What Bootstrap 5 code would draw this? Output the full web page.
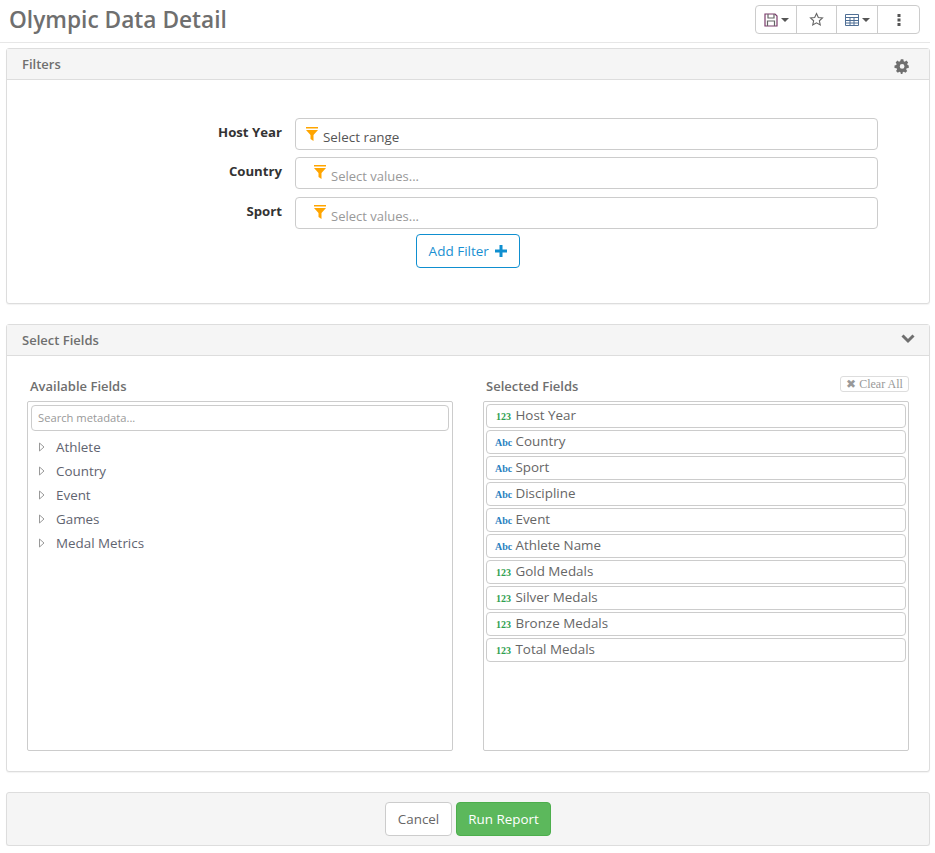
<!DOCTYPE html>
<html lang="en">
<head>
  <meta charset="UTF-8">
  <meta name="viewport" content="width=device-width, initial-scale=1.0">
  <title>Olympic Data Detail</title>
  <link href="https://cdn.jsdelivr.net/npm/bootstrap@5.3.3/dist/css/bootstrap.min.css" rel="stylesheet">
  <style>
    body {
      font-family: "Open Sans", "Noto Sans", sans-serif;
      font-size: 13.4px;
      color: #666;
      background: #fff;
      overflow: hidden;
    }
    .page-wrap { padding: 0 5px 0 6px; }
    .page-head {
      height: 43px;
      margin: 0 0 5px -6px;
      padding: 0 10px 0 9px;
      border-bottom: 1px solid #e7e7e7;
    }
    .page-title { font-size: 22.7px; font-weight: 600; color: #6f6f6f; line-height: 39px; margin: 0; }
    .tool-group { height: 29px; margin-top: 5px; border: 1px solid #ccc; border-radius: 4px; }
    .tool-btn {
      width: 41px;
      border-right: 1px solid #ccc;
      display: flex;
      align-items: center;
      justify-content: center;
      gap: 3px;
    }
    .tool-btn:nth-child(2) { width: 40px; }
    .tool-btn:last-child { border-right: 0; }
    .caret-down { width: 0; height: 0; border: 4px solid transparent; border-top-color: #555; border-bottom: 0; }
    .panel { border: 1px solid #ddd; border-radius: 3px; box-shadow: 0 1px 1px rgba(0,0,0,.05); }
    .panel-top {
      height: 31px;
      padding: 1px 15px 0;
      background: #f5f5f5;
      border-bottom: 1px solid #ddd;
      font-size: 13px;
      font-weight: 600;
      color: #6f6f6f;
    }
    .filter-body { height: 223px; padding-top: 37.6px; }
    .filter-row { height: 32px; margin-bottom: 7.5px; }
    .filter-label { width: 275px; text-align: right; font-size: 13.2px; font-weight: 700; color: #333; padding-top: 4.4px; line-height: 20px; }
    .filter-box {
      width: 583px;
      margin-left: 13px;
      height: 32px;
      border: 1px solid #ccc;
      border-radius: 4px;
      padding-left: 10px;
      color: #555;
      line-height: 36px;
      white-space: nowrap;
    }
    .filter-box.empty { padding-left: 18px; color: #999; line-height: 37px; font-size: 13px; }
    .funnel { vertical-align: -1px; margin-right: 5px; position: relative; top: -2px; }
    .filter-box.empty .funnel { top: -3px; }
    .add-filter {
      width: 104px;
      height: 34px;
      margin: -2.5px 0 0 409px;
      padding: 1px 0 0;
      font-size: 13.5px;
      color: #1a8fd1;
      border: 1px solid #0f8fd0;
      border-radius: 4px;
      background: #fff;
    }
    .add-filter svg { margin-left: 3px; vertical-align: -1px; }
    .fields-body { height: 415px; padding: 16px 20px 0; }
    .field-col { width: 426px; }
    .col-head { height: 29px; font-size: 13px; font-weight: 600; color: #6f6f6f; padding-left: 3px; line-height: 29px; }
    .clear-all {
      font-family: "Liberation Serif", serif;
      width: 69px;
      height: 16px;
      margin-top: 4px;
      line-height: 14px;
      font-size: 12px;
      color: #999;
      border: 1px solid #ddd;
      border-radius: 3px;
      text-align: center;
    }
    .field-box { height: 350px; border: 1px solid #ccc; border-radius: 2px; padding: 3px; }
    .field-box.sel-list { padding: 2px; }
    .search-box {
      height: 26px;
      border: 1px solid #ccc;
      border-radius: 4px;
      padding: 0 6px;
      font-size: 11.2px;
      line-height: 24px;
      color: #999;
      margin-bottom: 4px;
    }
    .tree-row { height: 24px; padding-left: 8px; gap: 11px; color: #5f6470; }
    .sel-item {
      height: 24px;
      margin-bottom: 2px;
      border: 1px solid #ccc;
      border-radius: 4px;
      padding-left: 8px;
      line-height: 20px;
      white-space: nowrap;
      color: #666;
    }
    .type-tag {
      font-family: "Liberation Serif", serif;
      font-size: 10px;
      font-weight: 700;
      display: inline-block;
      width: 17px;
      text-align: center;
    }
    .tag-num { color: #2fa04f; }
    .tag-str { color: #2a7fc0; }
    .run-bar { height: 54px; background: #f5f5f5; gap: 4px; }
    .btn-cancel { width: 67px; height: 34px; padding: 0; font-size: 13.4px; color: #666; background: #fff; border: 1px solid #ccc; border-radius: 4px; }
    .btn-run { width: 95px; height: 34px; padding: 0; font-size: 13.4px; color: #fff; background: #5cb85c; border: 1px solid #4cae4c; border-radius: 4px; }
  </style>
</head>
<body>
  <div class="page-wrap">
    <div class="page-head d-flex justify-content-between align-items-start">
      <h1 class="page-title">Olympic Data Detail</h1>
      <div class="tool-group d-flex">
        <div class="tool-btn">
          <svg width="14" height="14" viewBox="0 0 14 14" fill="none" stroke="#7a3a6a" stroke-width="1.2"><path d="M1 1h10l2 2v10H1z"/><path d="M4 1v4h6V1M3.500 13V8h7v5" stroke="#666"/></svg>
          <span class="caret-down"></span>
        </div>
        <div class="tool-btn">
          <svg width="15" height="15" viewBox="0 0 24 24" fill="none" stroke="#666" stroke-width="1.8"><path d="M12 2.500l2.900 6.200 6.700.8-5 4.600 1.400 6.700-6-3.400-6 3.400 1.400-6.700-5-4.600 6.700-.8z"/></svg>
        </div>
        <div class="tool-btn">
          <svg width="14" height="12" viewBox="0 0 14 12" fill="none" stroke="#4f6f95" stroke-width="1"><path d="M.5.500h13v11H.5zM.5 3.500h13M.5 6.500h13M.5 9h13M5 3.500v8M9 3.500v8"/></svg>
          <span class="caret-down"></span>
        </div>
        <div class="tool-btn">
          <svg width="4" height="12" viewBox="0 0 4 12" fill="#555"><rect x=".5" y="0" width="3" height="3"/><rect x=".5" y="4.500" width="3" height="3"/><rect x=".5" y="9" width="3" height="3"/></svg>
        </div>
      </div>
    </div>

    <div class="panel bg-white" style="margin-bottom:20px">
      <div class="panel-top d-flex justify-content-between align-items-center">
        <span>Filters</span>
        <svg width="16" height="16" viewBox="0 0 16 16" fill="#6f6f6f" style="margin:4px 4px 0 0"><path fill-rule="evenodd" d="M6.700 1h2.600l.4 1.900 1.200.5 1.600-1.100 1.900 1.900-1.100 1.600.5 1.200L15 7.400v2.600l-2.200.4-.5 1.200 1.100 1.600-1.900 1.900-1.600-1.100-1.200.5-.4 1.900H6.700l-.4-1.900-1.200-.5-1.600 1.100-1.900-1.900 1.100-1.600-.5-1.200L0 10V7.400l1.800-.4.500-1.200-1.100-1.600 1.900-1.900 1.600 1.100 1.200-.5zM8 6a2.500 2.500 0 100 5 2.500 2.500 0 000-5z" transform="translate(.5 -.6) scale(.95)"/></svg>
      </div>
      <div class="filter-body">
        <div class="filter-row d-flex">
          <div class="filter-label">Host Year</div>
          <div class="filter-box"><svg class="funnel" width="12" height="14" viewBox="0 0 12 14" fill="#ffa500"><path d="M0 0h12v1.500H0zM0 3h12L7.500 8v6l-3-2V8z"/></svg>Select range</div>
        </div>
        <div class="filter-row d-flex">
          <div class="filter-label">Country</div>
          <div class="filter-box empty"><svg class="funnel" width="12" height="14" viewBox="0 0 12 14" fill="#ffa500"><path d="M0 0h12v1.500H0zM0 3h12L7.500 8v6l-3-2V8z"/></svg>Select values...</div>
        </div>
        <div class="filter-row d-flex">
          <div class="filter-label">Sport</div>
          <div class="filter-box empty"><svg class="funnel" width="12" height="14" viewBox="0 0 12 14" fill="#ffa500"><path d="M0 0h12v1.500H0zM0 3h12L7.500 8v6l-3-2V8z"/></svg>Select values...</div>
        </div>
        <button type="button" class="btn add-filter d-block">Add Filter <svg width="12" height="12" viewBox="0 0 12 12" fill="#0f8fd0"><path d="M4.500 0h3v4.500H12v3H7.500V12h-3V7.500H0v-3h4.500z"/></svg></button>
      </div>
    </div>

    <div class="panel bg-white" style="margin-bottom:20px">
      <div class="panel-top d-flex justify-content-between align-items-center">
        <span>Select Fields</span>
        <svg width="14" height="10" viewBox="0 0 14 10" fill="none" stroke="#6f6f6f" stroke-width="3" style="margin:-4px -1px 0 0"><path d="M1.500 1.500L7 7l5.500-5.500"/></svg>
      </div>
      <div class="fields-body d-flex justify-content-between">
        <div class="field-col">
          <div class="col-head">Available Fields</div>
          <div class="field-box">
            <div class="search-box">Search metadata...</div>
            <div class="tree-row d-flex align-items-center"><svg width="6" height="10" viewBox="0 0 6 10" fill="none" stroke="#999"><path d="M.5 1l4.500 4-4.500 4z"/></svg>Athlete</div>
            <div class="tree-row d-flex align-items-center"><svg width="6" height="10" viewBox="0 0 6 10" fill="none" stroke="#999"><path d="M.5 1l4.500 4-4.500 4z"/></svg>Country</div>
            <div class="tree-row d-flex align-items-center"><svg width="6" height="10" viewBox="0 0 6 10" fill="none" stroke="#999"><path d="M.5 1l4.500 4-4.500 4z"/></svg>Event</div>
            <div class="tree-row d-flex align-items-center"><svg width="6" height="10" viewBox="0 0 6 10" fill="none" stroke="#999"><path d="M.5 1l4.500 4-4.500 4z"/></svg>Games</div>
            <div class="tree-row d-flex align-items-center"><svg width="6" height="10" viewBox="0 0 6 10" fill="none" stroke="#999"><path d="M.5 1l4.500 4-4.500 4z"/></svg>Medal Metrics</div>
          </div>
        </div>
        <div class="field-col">
          <div class="d-flex justify-content-between">
            <div class="col-head">Selected Fields</div>
            <div class="clear-all">&#10006; Clear All</div>
          </div>
          <div class="field-box sel-list">
            <div class="sel-item"><span class="type-tag tag-num">123</span> Host Year</div>
            <div class="sel-item"><span class="type-tag tag-str">Abc</span> Country</div>
            <div class="sel-item"><span class="type-tag tag-str">Abc</span> Sport</div>
            <div class="sel-item"><span class="type-tag tag-str">Abc</span> Discipline</div>
            <div class="sel-item"><span class="type-tag tag-str">Abc</span> Event</div>
            <div class="sel-item"><span class="type-tag tag-str">Abc</span> Athlete Name</div>
            <div class="sel-item"><span class="type-tag tag-num">123</span> Gold Medals</div>
            <div class="sel-item"><span class="type-tag tag-num">123</span> Silver Medals</div>
            <div class="sel-item"><span class="type-tag tag-num">123</span> Bronze Medals</div>
            <div class="sel-item"><span class="type-tag tag-num">123</span> Total Medals</div>
          </div>
        </div>
      </div>
    </div>

    <div class="panel run-bar d-flex justify-content-center align-items-center">
      <button type="button" class="btn btn-cancel">Cancel</button>
      <button type="button" class="btn btn-run">Run Report</button>
    </div>
  </div>
  <script src="https://cdn.jsdelivr.net/npm/bootstrap@5.3.3/dist/js/bootstrap.bundle.min.js"></script>
</body>
</html>
